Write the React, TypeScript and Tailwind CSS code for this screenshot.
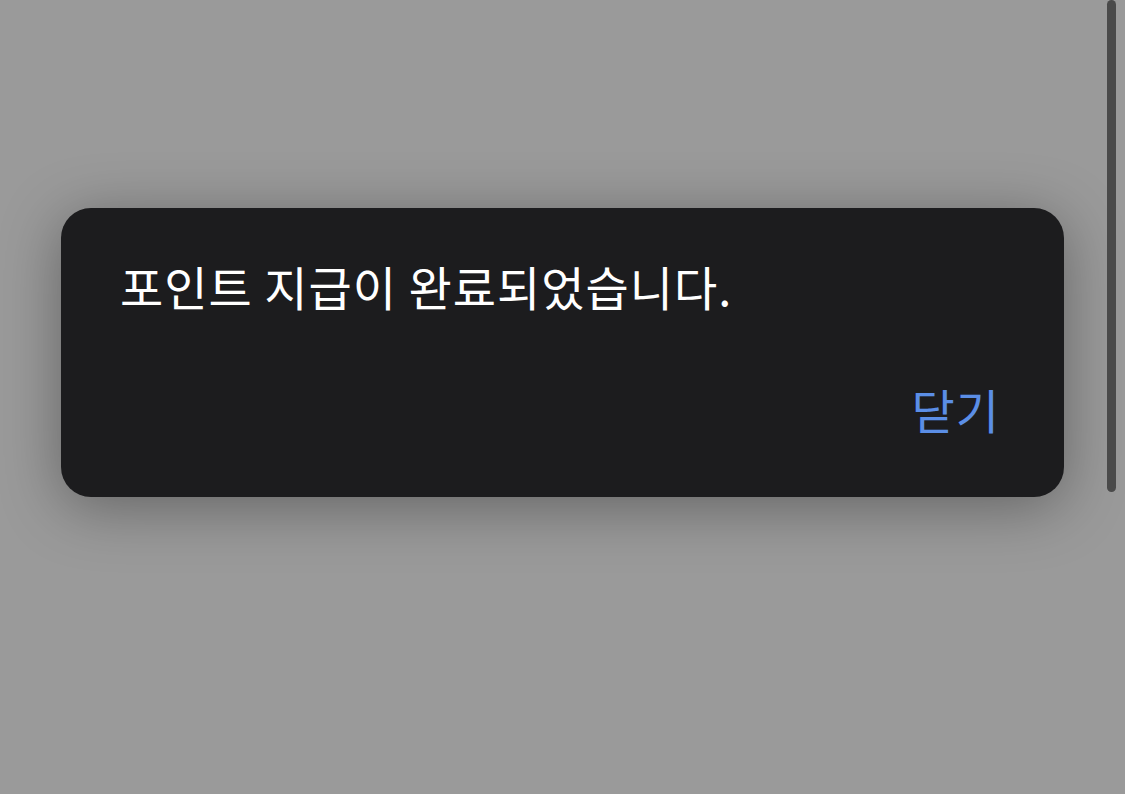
export default function App() {
  return (
    <div
      className="relative h-[794px] w-full overflow-hidden bg-[#9a9a9a] pt-[208px] pl-[61px]"
      style={{ fontFamily: '"Noto Sans CJK KR", "Noto Sans", sans-serif' }}
    >
      <div className="flex h-[289px] w-[1003px] flex-col rounded-[30px] bg-[#1c1c1e] shadow-[0_10px_60px_rgba(0,0,0,0.35)]">
        <p className="pt-[48px] pl-[59px] text-[47px] leading-[60px] tracking-[1px] text-white">
          포인트 지급이 완료되었습니다.
        </p>
        <div className="mt-auto flex justify-end pr-[64px] pb-[58px]">
          <button className="text-[47px] leading-[60px] tracking-[1px] text-[#5b8ee6]">닫기</button>
        </div>
      </div>
      <div className="absolute top-0 right-[9px] h-[492px] w-[9px] rounded-full bg-[#4a4a4a]" />
    </div>
  );
}
